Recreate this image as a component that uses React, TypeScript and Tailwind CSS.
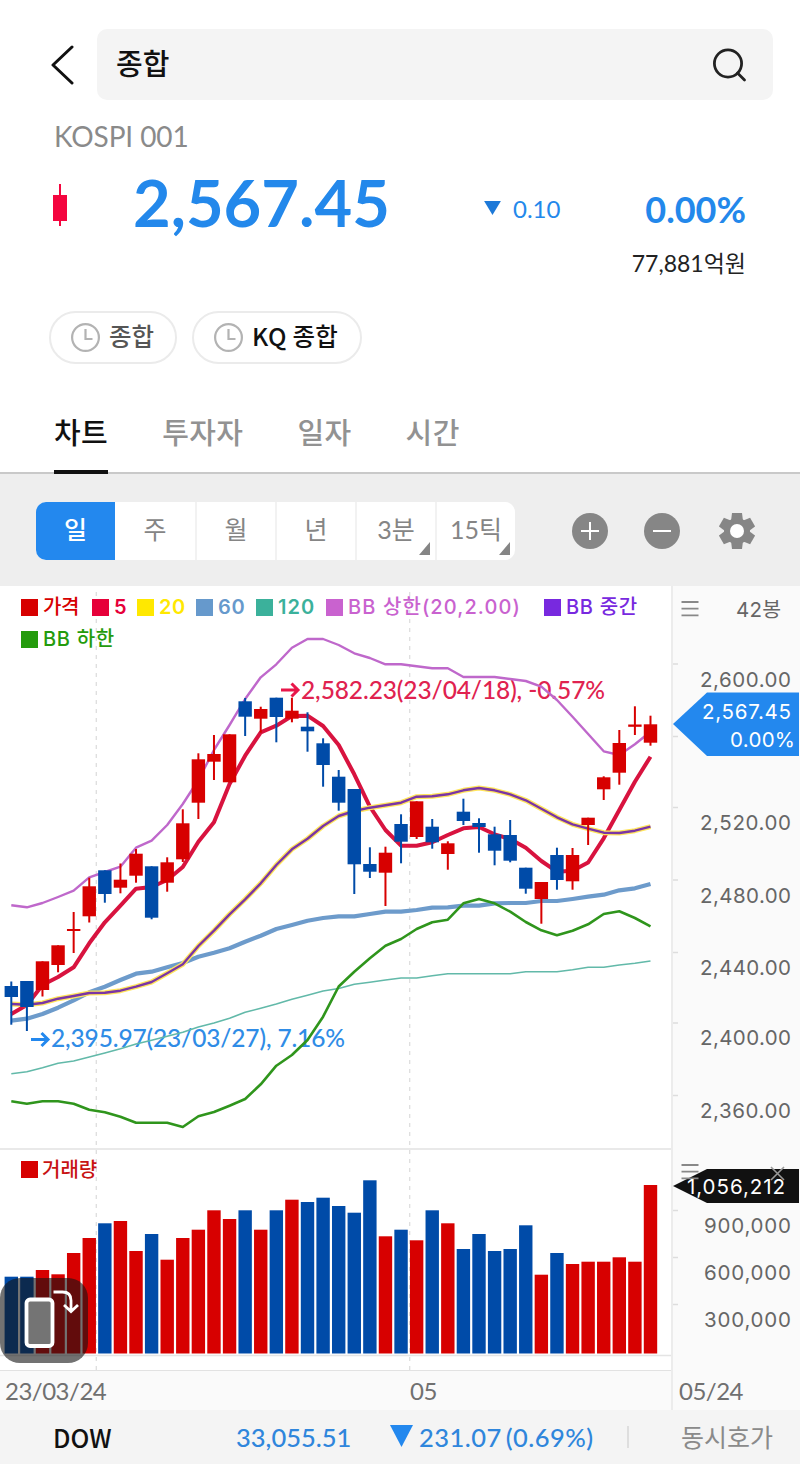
import React from "react";
import clsx from "clsx";

const RED = "#d70000";
const BLUE = "#004ba8";
const STEP = 15.59;
const FIRST_X = 11.3;
const BAR_WIDTH = 13.4;

type Candle = [high: number, top: number, bottom: number, low: number, up: 0 | 1];

const candles: Candle[] = [
  [981.5, 986, 997, 1024.7, 0],
  [981, 981, 1007, 1031, 0],
  [961.3, 961.3, 990, 996.5, 1],
  [945.3, 945.3, 965, 972.3, 1],
  [912, 929, 931, 953, 1],
  [877.7, 886.3, 916.3, 922.5, 1],
  [870.3, 870.3, 894, 902.7, 0],
  [863.5, 879.7, 887.7, 893.3, 1],
  [849, 853.7, 875.7, 882.7, 1],
  [866.3, 866.3, 917.7, 919.3, 0],
  [857.3, 862.3, 882.7, 891.7, 1],
  [809.3, 823.3, 859.3, 862, 1],
  [753.3, 759.3, 802.7, 819, 1],
  [735, 754, 761.7, 780, 1],
  [734.3, 734.3, 782.3, 782.3, 1],
  [698, 701.3, 716.7, 736, 0],
  [706.7, 709, 718.7, 732.7, 1],
  [697.7, 697.7, 717, 742.3, 0],
  [697.7, 710.7, 718.7, 722.3, 1],
  [712.3, 726.7, 731.3, 751.7, 0],
  [738.3, 743.3, 765, 786.7, 0],
  [770, 776.7, 802.7, 810.7, 0],
  [789, 789, 864.3, 894, 0],
  [847.3, 864, 871.7, 878, 0],
  [846.7, 852.7, 872.7, 906, 1],
  [814.3, 824, 841.7, 863.3, 0],
  [801.3, 801.3, 837, 839, 1],
  [819, 826.7, 842.3, 848.7, 0],
  [841.3, 843.3, 854, 869.7, 1],
  [798.7, 811.7, 821, 825, 0],
  [818.3, 823, 827, 852.7, 0],
  [826.7, 834.3, 850.7, 865.3, 0],
  [820, 835, 860.7, 862.3, 0],
  [867.7, 867.7, 888.7, 893.7, 0],
  [882, 882, 899, 923.7, 1],
  [847.7, 855, 880, 889.7, 0],
  [848, 855, 881.3, 889.7, 1],
  [817.7, 817.7, 825, 845, 1],
  [776.3, 777.3, 789.3, 800, 1],
  [730, 743, 772.7, 784.7, 1],
  [706.3, 724.5, 726.8, 735, 1],
  [715.7, 724.3, 742.7, 745.7, 1],
];

const ma5 = [
  1014, 1005, 985, 977, 967.3, 943.3, 922.3, 905.7, 888.7, 887, 880, 867, 841.7, 822.3, 784,
  755.7, 732.3, 725.7, 716, 715.7, 726, 745, 774.3, 806.7, 830, 845.7, 845.7, 842.3, 835, 828.3,
  827, 834.3, 839, 847.7, 861, 871.7, 870.7, 862.5, 838.3, 810, 781.7, 756.7,
];

const ma20 = [
  1004, 1004.7, 1003, 998.7, 996, 993, 992.7, 990.7, 986.7, 982, 973.3, 964.3, 946, 930.7, 914.3,
  899.3, 883.3, 865, 849.3, 838.7, 826, 816, 811, 807.7, 805.3, 802.7, 796.7, 796.3, 794.3, 790.3,
  788, 790.3, 794.3, 800.3, 808.7, 817.3, 824.3, 828.7, 832.7, 833, 830.7, 826.7,
];

const ma60 = [
  1020.7, 1018.7, 1014, 1007.7, 1000.3, 992.3, 986.7, 980, 973.7, 971.7, 967.3, 963, 956.7, 952.7,
  948.3, 941.7, 935.7, 929, 925, 920.7, 918, 916.3, 916.3, 914, 911.7, 911.7, 910, 907.7, 907.3,
  905.7, 905.7, 903.3, 903, 903, 901, 901, 899, 896.7, 894.7, 890.3, 888.3, 884,
];

const ma120 = [
  1073.7, 1071.7, 1067.7, 1063.3, 1061, 1057, 1053, 1048.7, 1044, 1040.3, 1036.3, 1032.3, 1027,
  1023, 1018.3, 1012.3, 1008.3, 1004, 999.3, 995.3, 991, 988.5, 984.3, 982.3, 980, 978, 978, 975.7,
  973.7, 973.7, 973.7, 973.7, 973.7, 971.7, 971.7, 971.7, 969.7, 967.3, 967.3, 965, 963.3, 961,
];

const bbUpper = [
  905.3, 907.3, 903, 897, 890.7, 877.3, 872, 866.7, 847.7, 840.7, 825, 804, 780, 750, 725, 699,
  677.3, 664.3, 647.7, 639, 639, 645, 653.3, 658, 664.3, 664.3, 666.3, 668.3, 668.3, 677, 677, 677,
  679, 681, 686.7, 700, 716.7, 734, 751.3, 755, 744.3, 731.7,
];

const bbLower = [
  1101.3, 1103.7, 1101.3, 1101.3, 1103.7, 1109.7, 1112.3, 1116.7, 1122.7, 1122.7, 1122.7, 1127,
  1116.3, 1112, 1105.7, 1099, 1084.3, 1065.7, 1055, 1040, 1016.7, 986.5, 971.7, 958.3, 945.7, 939,
  929, 922.3, 919.7, 903.3, 899, 903.3, 911.7, 922, 930.3, 935.3, 930.7, 924.3, 914, 911.3, 918,
  926.3,
];

const volumes: [top: number, up: 0 | 1][] = [
  [1276.7, 0], [1276.7, 0], [1270, 1], [1274.3, 1], [1253, 1], [1238, 1], [1223.3, 0], [1221, 1],
  [1251, 1], [1234, 0], [1259.7, 1], [1238, 1], [1229.7, 1], [1210.3, 1], [1219, 1], [1210.3, 0],
  [1229.7, 1], [1210.3, 0], [1199.7, 1], [1202, 0], [1197.7, 0], [1206, 0], [1212.7, 0],
  [1180.3, 0], [1236.3, 1], [1229.7, 0], [1240.3, 1], [1210.3, 0], [1223.3, 1], [1249, 0],
  [1234, 0], [1251, 0], [1249, 0], [1225.3, 0], [1274.7, 1], [1253, 0], [1264, 1], [1261.7, 1],
  [1261.7, 1], [1257.3, 1], [1261.7, 1], [1185, 1],
];

const legends = [
  { label: "가격", color: "#d70000", className: "w-[71px] font-medium tracking-[-0.4px]" },
  { label: "5", color: "#e60039", className: "w-[45px] font-semibold tracking-[0.6px]" },
  { label: "20", color: "#ffe800", className: "w-[59px] font-semibold tracking-[0.6px]" },
  { label: "60", color: "#6699cc", className: "w-[60px] font-semibold tracking-[0.8px]" },
  { label: "120", color: "#3bb19b", className: "w-[70px] font-semibold tracking-[1px]" },
  { label: "BB 상한(20,2.00)", color: "#c962cf", className: "w-[218px] font-medium tracking-[1.1px]" },
  { label: "BB 중간", color: "#7829df", className: "w-[110px] font-medium tracking-[0.7px]" },
  { label: "BB 하한", color: "#249b0c", className: "w-[110px] font-medium tracking-[0.7px]" },
];

const periods = [
  { label: "일", active: true },
  { label: "주" },
  { label: "월" },
  { label: "년" },
  { label: "3분", more: true },
  { label: "15틱", more: true },
];

const tabs = ["차트", "투자자", "일자", "시간"];
const priceTicks = [
  { label: "2,600.00", y: 680 },
  { label: "2,520.00", y: 823 },
  { label: "2,480.00", y: 895.5 },
  { label: "2,440.00", y: 967.5 },
  { label: "2,400.00", y: 1038 },
  { label: "2,360.00", y: 1110.5 },
];
const volumeTicks = [
  { label: "900,000", y: 1226 },
  { label: "600,000", y: 1273 },
  { label: "300,000", y: 1320 },
];

const xAt = (i: number) => FIRST_X + STEP * i;
const toPoints = (values: number[]) => values.map((y, i) => `${xAt(i)},${y}`).join(" ");

const Line = ({ values, color, width }: { values: number[]; color: string; width: number }) => (
  <polyline
    points={toPoints(values)}
    fill="none"
    stroke={color}
    strokeWidth={width}
    strokeLinejoin="round"
  />
);

const SearchHeader = () => (
  <header className="flex items-center pt-[29px] pl-[50px] pr-[27px]">
    <svg className="w-6 h-10 shrink-0" viewBox="0 0 24 40" fill="none" stroke="#111" strokeWidth="3">
      <path d="M22 2 3 20 22 38" strokeLinecap="round" strokeLinejoin="round" />
    </svg>
    <div className="flex items-center justify-between grow h-[71px] ml-[23px] pl-[19px] pr-[25px] rounded-[10px] bg-[#f4f4f4]">
      <span className="text-[29px] leading-none font-medium text-[#111] -mt-[3px]">종합</span>
      <svg className="size-[36px]" viewBox="0 0 36 36" fill="none" stroke="#222" strokeWidth="2.8">
        <circle cx="16" cy="16.5" r="13.6" />
        <path d="m25.500 26 7 7" strokeLinecap="round" />
      </svg>
    </div>
  </header>
);

const Quote = () => (
  <section className="h-[211px] pl-[53px] pr-[54px]">
    <p className="h-[69px] pt-[20px] pl-px text-[28px] leading-[32px] tracking-[-0.1px] text-[#8a8a8a] whitespace-nowrap">
      KOSPI 001
    </p>
    <div className="flex items-center h-[68px] text-[#2388eb]">
      <svg className="w-[14px] h-[44px] mt-[3px] shrink-0" viewBox="0 0 14 44">
        <path d="M6 1h2v42H6z" fill="#f4063f" />
        <path d="M0 12h14v26H0z" fill="#f4063f" />
      </svg>
      <strong className="w-[350px] ml-[66px] -mt-px text-[65px] leading-none font-bold whitespace-nowrap">
        2,567.45
      </strong>
      <span className="flex items-center w-[110px] mt-3 ml-px text-[24px] leading-none">
        <svg className="w-[17px] h-[14px] mr-3 -mt-[2px]" viewBox="0 0 18 15">
          <path d="M0 0h18L9 15z" fill="#1d79d8" />
        </svg>
        0.10
      </span>
      <strong className="ml-auto mt-3 text-[36px] leading-none font-bold">0.00%</strong>
    </div>
    <p className="pt-[10px] text-right text-[23px] leading-8 text-[#222]">77,881억원</p>
  </section>
);

const Chip = ({ label, dark }: { label: string; dark?: boolean }) => (
  <button
    className={clsx(
      "flex items-center h-[53px] pl-5 rounded-full border-2 border-[#ebebeb] text-[24.500px] leading-none font-medium whitespace-nowrap font-['Noto_Sans_CJK_KR',sans-serif]",
      dark ? "pr-[22px] tracking-[0.25px] text-[#111]" : "pr-[21px] text-[#555]"
    )}
  >
    <svg className="size-[30px] mr-2" viewBox="0 0 30 30" fill="none" stroke="#b3b3b3" strokeWidth="2.2">
      <circle cx="14.5" cy="14.5" r="13.4" />
      <path d="M14.500 6v10h7" />
    </svg>
    <span className="-mt-[2px]">{label}</span>
  </button>
);

const Tabs = () => (
  <nav className="flex gap-[54px] h-[110px] pl-[54px] border-b-2 border-[#c9c9c9]">
    {tabs.map((tab, i) => (
      <button
        key={tab}
        className={clsx(
          "relative h-[110px] text-[29px] leading-none font-medium tracking-[0.4px] whitespace-nowrap",
          i === 0 ? "pt-[30px] text-[#111] border-b-4 border-[#111]" : "pt-[26px] text-[#929292]"
        )}
      >
        {tab}
      </button>
    ))}
  </nav>
);

const Toolbar = () => (
  <div className="flex items-center h-[112px] pt-[2px] pl-9 bg-[#eeeeee]">
    <div className="flex h-[58px] rounded-[10px] overflow-hidden bg-white">
      {periods.map((period, i) => (
        <button
          key={period.label}
          className={clsx(
            "relative h-[58px] pb-1 text-[25px] leading-none whitespace-nowrap",
            period.active ? "w-[79px] bg-[#2388ee] text-white font-medium" : "w-[80px] text-[#858585]",
            i > 1 && "border-l-2 border-[#f2f2f2]"
          )}
        >
          {period.label}
          {period.more && (
            <svg className="absolute right-[5px] bottom-[5px] w-[11px] h-[13px]" viewBox="0 0 11 13">
              <path d="M11 0v13H0z" fill="#858585" />
            </svg>
          )}
        </button>
      ))}
    </div>
    <svg className="size-9 ml-[57px]" viewBox="0 0 36 36">
      <circle cx="18" cy="18" r="18" fill="#868686" />
      <path d="M18 9v18M9 18h18" stroke="#fff" strokeWidth="2" />
    </svg>
    <svg className="size-9 ml-[36px]" viewBox="0 0 36 36">
      <circle cx="18" cy="18" r="18" fill="#868686" />
      <path d="M9 18h18" stroke="#fff" strokeWidth="2" />
    </svg>
    <svg className="size-9 ml-[39px]" viewBox="-18 -18 36 36" fill="#868686">
      <circle r="13" />
      {[0, 60, 120].map((angle) => (
        <path key={angle} d="M-5-18H5L6-10V10L5 18H-5L-6 10V-10z" transform={`rotate(${angle})`} />
      ))}
      <circle r="7" fill="#fff" />
    </svg>
  </div>
);

const PriceChart = () => (
  <div className="relative h-[564px] border-b-2 border-[#e9e9e9]">
    <svg className="block w-[671px] h-[562px]" viewBox="0 586 671 562">
      <path d="M96.3 592V1148M409.7 592V1148" stroke="#dedede" strokeWidth="1.3" strokeDasharray="4 5" />
      <g fontFamily="Lato, 'Noto Sans CJK KR', sans-serif" fontSize="24.5" fontWeight="500">
        <text x="301" y="698.5" fill="#e0224f" textLength="304">
          2,582.23(23/04/18), -0.57%
        </text>
        <text x="51" y="1046.5" fill="#2f8ce6" textLength="294">
          2,395.97(23/03/27), 7.16%
        </text>
      </g>
      <path d="M281 690h16M291.500 683.500l6.500 6.500-6.500 6.500" fill="none" stroke="#e8174a" strokeWidth="3" />
      <path d="M31 1039.5h16M41.500 1033l6.500 6.500-6.500 6.500" fill="none" stroke="#2388ee" strokeWidth="3" />
      <Line values={ma5} color="#d8133f" width={4} />
      <Line values={ma60} color="#6d9bcb" width={4.2} />
      <Line values={ma20} color="#ffe55c" width={5} />
      <Line values={ma120} color="#62b9a9" width={1.6} />
      <Line values={bbUpper} color="#bf68cb" width={2.4} />
      <Line values={ma20} color="#7a35a5" width={2.4} />
      <Line values={bbLower} color="#2f951c" width={2.6} />
      {candles.map(([high, top, bottom, low, up], i) => (
        <g key={i} fill={up ? RED : BLUE}>
          <rect x={xAt(i) - 1} y={high} width={2} height={low - high} />
          <rect x={xAt(i) - BAR_WIDTH / 2} y={top} width={BAR_WIDTH} height={bottom - top} />
        </g>
      ))}
    </svg>
    <ul className="absolute left-[21px] top-[5px] flex flex-wrap w-[640px] font-[Inter,'Noto_Sans_CJK_KR',sans-serif]">
      {legends.map((legend) => (
        <li
          key={legend.label}
          className={clsx(
            "flex items-center h-8 text-[20px] leading-none whitespace-nowrap",
            legend.className
          )}
          style={{ color: legend.color }}
        >
          <i className="size-[17px] mr-[5px] shrink-0" style={{ background: legend.color }} />
          {legend.label}
        </li>
      ))}
    </ul>
  </div>
);

const VolumeChart = () => (
  <div className="relative h-[221px] border-b border-[#e2e2e2]">
    <svg className="block w-[671px] h-[220px]" viewBox="0 1150 671 220">
      <path d="M96.3 1150V1370M409.7 1150V1370" stroke="#dedede" strokeWidth="1.3" strokeDasharray="4 5" />
      <path d="M0 1355.5H671" stroke="#e4e4e4" strokeWidth="1.5" />
      {volumes.map(([top, up], i) => (
        <rect
          key={i}
          x={xAt(i) - BAR_WIDTH / 2}
          y={top}
          width={BAR_WIDTH}
          height={1353.5 - top}
          fill={up ? RED : BLUE}
        />
      ))}
    </svg>
    <p className="absolute left-[21px] top-[10px] flex items-center h-[18px] text-[20px] leading-none font-medium text-[#c81414]">
      <i className="size-[17px] mr-1 bg-[#d70000]" />
      거래량
    </p>
    <button className="absolute left-0 top-[128px] w-[88px] h-[85px] rounded-[20px] bg-[#141414]/60">
      <svg className="block w-[88px] h-[85px]" viewBox="0 0 88 85" fill="none" stroke="#fff">
        <rect x="26.5" y="21.5" width="26" height="46.5" rx="3.5" fill="#747474" strokeWidth="3.8" />
        <path d="M53.500 14h9q8.500 0 8.500 8.500v10M64 27l7 6.500 7-6.500" strokeWidth="2.800" />
      </svg>
    </button>
  </div>
);

const Hamburger = ({ y }: { y: number }) => (
  <path d={`M8.5 ${y}h17M8.5 ${y + 6.7}h17M8.5 ${y + 13.4}h17`} stroke="#888" strokeWidth="1.8" />
);

// viewBox follows the chart's own vertical scale so ticks line up with the plots
const Axis = () => (
  <svg
    className="block w-[129px] h-[785px] bg-[#fafafa] border-l-2 border-[#ececec]"
    viewBox="0 586 127 785"
    fontFamily="Inter, 'Noto Sans CJK KR', sans-serif"
    fontSize="20.5"
    fill="#666"
  >
    <path
      d="M0 664h5M0 736.500h5M0 807.500h5M0 880h5M0 952.500h5M0 1023h5M0 1095.500h5M0 1210.500h5M0 1257.500h5M0 1304.500h5"
      stroke="#ddd"
      strokeWidth="1.5"
    />
    <Hamburger y={602} />
    <text x="63" y="616.5" textLength="45">42봉</text>
    {priceTicks.map((tick) => (
      <text key={tick.label} x="27" y={tick.y + 7} textLength="91">
        {tick.label}
      </text>
    ))}
    <path d="M0 724 34 692.500H126V756H34z" fill="#2388ee" />
    <g fill="#fff">
      <text x="29" y="719" textLength="89">2,567.45</text>
      <text x="57" y="747" textLength="65">0.00%</text>
    </g>
    {volumeTicks.map((tick) => (
      <text key={tick.label} x="31" y={tick.y + 7} textLength="87">
        {tick.label}
      </text>
    ))}
    <path d="M0 1186 34 1169H126V1203H34z" fill="#111" />
    <Hamburger y={1165} />
    <path d="m98 1167 13 13m0-13-13 13" stroke="#999" strokeWidth="1.6" />
    <text x="14" y="1193.500" fill="#fff" textLength="98">1,056,212</text>
  </svg>
);

const DateAxis = () => (
  <div className="flex items-center h-[39px] bg-[#fafafa] text-[24px] leading-none tracking-[-0.5px] text-[#707070]">
    <span className="w-[404px] pl-[5px]">23/03/24</span>
    <span className="w-[267px] pl-[6px]">05</span>
    <span className="flex items-center h-full pl-[6px] border-l-2 border-[#ececec]">05/24</span>
  </div>
);

const Ticker = () => (
  <footer className="flex items-center h-[54px] pl-[54px] bg-[#f4f4f4] text-[25.500px] leading-none text-[#2f86dc] whitespace-nowrap">
    <span className="w-[182px] -ml-px mr-px font-['Noto_Sans_CJK_KR',sans-serif] text-[25px] font-medium text-[#111]">
      DOW
    </span>
    <span className="w-[154px] mt-px font-medium">33,055.51</span>
    <svg className="w-[23px] h-[22px] mr-[6px] -mt-[2px]" viewBox="0 0 23 22">
      <path d="M0 0h23L11.500 22z" fill="#2388ee" />
    </svg>
    <span className="flex gap-1 w-[208px] mt-px font-medium tracking-[0.45px]">
      <span>231.07</span>
      <span>(0.69%)</span>
    </span>
    <i className="w-[2px] h-[22px] bg-[#dedede]" />
    <span className="ml-[52px] text-[25px] text-[#8a8a8a]">동시호가</span>
  </footer>
);

const App = () => {
  return (
    <div className="w-[800px] h-[1464px] overflow-hidden bg-white font-[Lato,'Noto_Sans_CJK_KR',sans-serif]">
      <SearchHeader />
      <Quote />
      <div className="flex gap-[15px] h-[53px] pl-[49px]">
        <Chip label="종합" />
        <Chip label="KQ 종합" dark />
      </div>
      <Tabs />
      <Toolbar />
      <main className="flex">
        <div className="w-[671px]">
          <PriceChart />
          <VolumeChart />
        </div>
        <Axis />
      </main>
      <DateAxis />
      <Ticker />
    </div>
  );
};

export default App;
